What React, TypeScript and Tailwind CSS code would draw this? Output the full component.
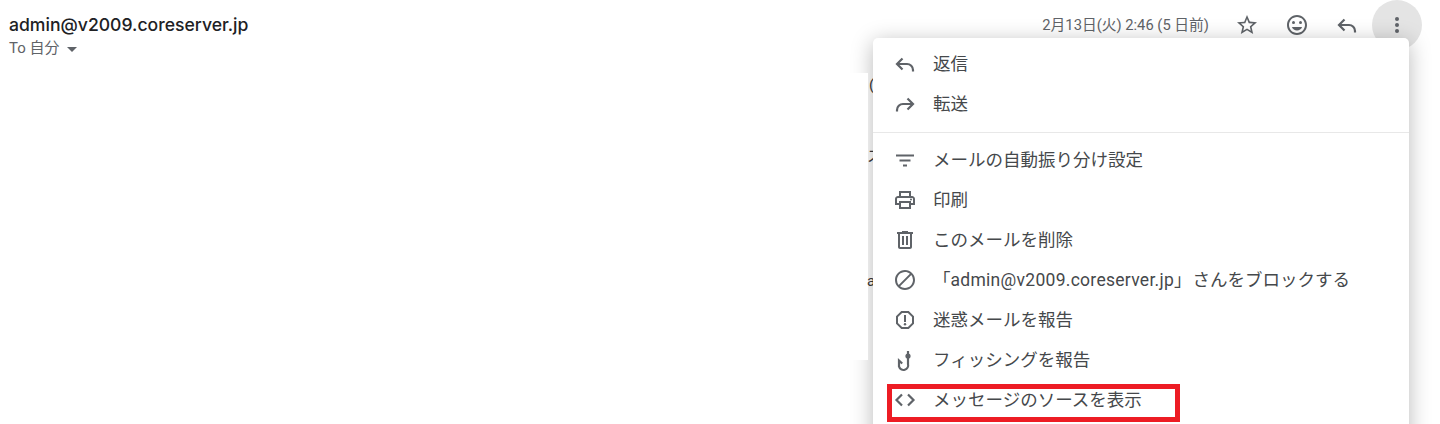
import type { ReactNode } from 'react';

const font = { fontFamily: 'Roboto, "Noto Sans CJK JP", sans-serif' };

function Icon({ size = 24, children }: { size?: number; children: ReactNode }) {
  return (
    <svg width={size} height={size} viewBox="0 0 24 24" fill="#5f6368">
      {children}
    </svg>
  );
}

const ReplyIcon = () => (
  <Icon>
    <path d="M9.5 6.5 4 12l5.5 5.5M4 12h10a6 6 0 0 1 6 6v1.5" fill="none" stroke="#5f6368" strokeWidth="2.2" />
  </Icon>
);

const ForwardIcon = () => (
  <Icon>
    <path d="M14.5 6.5 20 12l-5.5 5.5M20 12H10a6 6 0 0 0-6 6v1.5" fill="none" stroke="#5f6368" strokeWidth="2.2" />
  </Icon>
);

const FilterIcon = () => (
  <Icon>
    <path d="M3 6.5h18v2H3zM6.5 11.5h11v2h-11zM10 16.5h4v2h-4z" />
  </Icon>
);

const PrintIcon = () => (
  <Icon>
    <path d="M19 8h-1V3H6v5H5c-1.66 0-3 1.34-3 3v6h4v4h12v-4h4v-6c0-1.66-1.34-3-3-3zM8 5h8v3H8V5zm8 14H8v-4h8v4zm4-4h-2v-2H6v2H4v-4c0-.55.45-1 1-1h14c.55 0 1 .45 1 1v4z" />
    <circle cx="18" cy="11.5" r="1" />
  </Icon>
);

const TrashIcon = () => (
  <Icon>
    <path d="M15 4V3H9v1H4v2h1v13c0 1.1.9 2 2 2h10c1.1 0 2-.9 2-2V6h1V4h-5zm2 15H7V6h10v13zM9 8h2v9H9zm4 0h2v9h-2z" />
  </Icon>
);

const BlockIcon = () => (
  <Icon>
    <path d="M12 2C6.48 2 2 6.48 2 12s4.48 10 10 10 10-4.48 10-10S17.52 2 12 2zM4 12c0-4.42 3.58-8 8-8 1.85 0 3.55.63 4.9 1.69L5.69 16.9A7.9 7.9 0 0 1 4 12zm8 8c-1.85 0-3.55-.63-4.9-1.69L18.31 7.1A7.9 7.9 0 0 1 20 12c0 4.42-3.58 8-8 8z" />
  </Icon>
);

const ReportIcon = () => (
  <Icon>
    <path d="M15.73 3H8.27L3 8.27v7.46L8.27 21h7.46L21 15.73V8.27L15.73 3zM19 14.9 14.9 19H9.1L5 14.9V9.1L9.1 5h5.8L19 9.1v5.8z" />
    <path d="M11 7h2v7h-2z" />
    <circle cx="12" cy="16.2" r="1.2" />
  </Icon>
);

const HookIcon = () => (
  <Icon>
    <path d="M15 3v13a4.6 4.6 0 0 1-9 2.5V12.5l3.2 3" fill="none" stroke="#5f6368" strokeWidth="2.2" />
    <circle cx="15" cy="8" r="2.6" />
  </Icon>
);

const CodeIcon = () => (
  <Icon>
    <path d="M9 6.5 3.5 12 9 17.5M15 6.5l5.5 5.5-5.5 5.5" fill="none" stroke="#5f6368" strokeWidth="2.2" />
  </Icon>
);

const StarIcon = () => (
  <Icon>
    <path d="M22 9.24l-7.19-.62L12 2 9.19 8.63 2 9.24l5.46 4.73L5.82 21 12 17.27 18.18 21l-1.63-7.03L22 9.24zM12 15.4l-3.76 2.27 1-4.28-3.32-2.88 4.38-.38L12 6.1l1.71 4.04 4.38.38-3.32 2.88 1 4.28L12 15.4z" />
  </Icon>
);

const SmileIcon = () => (
  <Icon>
    <path d="M11.99 2C6.47 2 2 6.48 2 12s4.47 10 9.99 10C17.52 22 22 17.52 22 12S17.52 2 11.99 2zM12 20c-4.42 0-8-3.58-8-8s3.58-8 8-8 8 3.58 8 8-3.58 8-8 8z" />
    <circle cx="15.5" cy="9.5" r="1.5" />
    <circle cx="8.5" cy="9.5" r="1.5" />
    <path d="M12 17.5c2.33 0 4.31-1.46 5.11-3.5H6.89c.8 2.04 2.78 3.5 5.11 3.5z" />
  </Icon>
);

const DotsIcon = () => (
  <Icon>
    <circle cx="12" cy="6" r="2" />
    <circle cx="12" cy="12" r="2" />
    <circle cx="12" cy="18" r="2" />
  </Icon>
);

function MenuRow({ icon, children }: { icon: ReactNode; children: ReactNode }) {
  return (
    <div className="flex h-10 items-center">
      <div className="flex w-[60px] justify-center pl-[4px]">{icon}</div>
      <span className="text-[17.5px] whitespace-nowrap text-[#45484b]">{children}</span>
    </div>
  );
}

export default function App() {
  return (
    <div className="relative h-[424px] w-[1440px] overflow-hidden bg-white" style={font}>
      <div className="flex items-start justify-between pr-[18px] pl-[9px]">
        <div className="pt-[13px]">
          <div className="font-['Inter'] text-[17.6px] leading-6 font-medium text-[#202124]">admin@v2009.coreserver.jp</div>
          <div className="mt-[1px] flex items-center text-[15px] leading-5 text-[#5f6368]">
            To 自分
            <span className="mt-[2px] ml-[7px] border-x-[5px] border-t-[5px] border-x-transparent border-t-[#5f6368]" />
          </div>
        </div>
        <div className="flex items-center">
          <span className="mr-[13px] text-[14.75px] text-[#5f6368]">2月13日(火) 2:46 (5 日前)</span>
          <div className="flex h-[50px] w-[50px] items-center justify-center"><StarIcon /></div>
          <div className="flex h-[50px] w-[50px] items-center justify-center"><SmileIcon /></div>
          <div className="flex h-[50px] w-[50px] items-center justify-center"><ReplyIcon /></div>
          <div className="flex h-[50px] w-[50px] items-center justify-center rounded-full bg-[#e4e4e4]"><DotsIcon /></div>
        </div>
      </div>

      {/* dropdown, sits over the header */}
      <div className="absolute top-[38px] left-[873px] h-[420px] w-[536px] rounded-[5px] bg-white pt-[6px] shadow-[0_4px_22px_rgba(0,0,0,0.28)]">
        <MenuRow icon={<ReplyIcon />}>返信</MenuRow>
        <MenuRow icon={<ForwardIcon />}>転送</MenuRow>
        <div className="mt-[8px] mb-[7px] border-t border-[#e8e8e8]" />
        <MenuRow icon={<FilterIcon />}>メールの自動振り分け設定</MenuRow>
        <MenuRow icon={<PrintIcon />}>印刷</MenuRow>
        <MenuRow icon={<TrashIcon />}>このメールを削除</MenuRow>
        <MenuRow icon={<BlockIcon />}>
          「<span className="tracking-[0.28px]">admin@v2009.coreserver.jp</span>」<span className="ml-[1px]">さんをブロックする</span>
        </MenuRow>
        <MenuRow icon={<ReportIcon />}>迷惑メールを報告</MenuRow>
        <MenuRow icon={<HookIcon />}>フィッシングを報告</MenuRow>
        <MenuRow icon={<CodeIcon />}>メッセージのソースを表示</MenuRow>
      </div>

      {/* message body peeking out beside the menu */}
      <div className="absolute top-[73px] left-0 h-[287px] w-[868px] bg-white" />
      <div className="absolute top-[75px] left-[869px] w-[4px] overflow-hidden text-[15px] leading-5 text-[#333]">(</div>
      <div className="absolute top-[146px] left-[867px] w-[6px] overflow-hidden text-[15px] leading-5 text-[#333]">ス</div>
      <div className="absolute top-[271px] left-[867px] w-[6px] overflow-hidden text-[15px] leading-5 text-[#333]">a</div>

      {/* red annotation box */}
      <div className="absolute top-[384px] left-[887px] h-[38px] w-[293px] border-[5px] border-[#ed1c24]" />
    </div>
  );
}
